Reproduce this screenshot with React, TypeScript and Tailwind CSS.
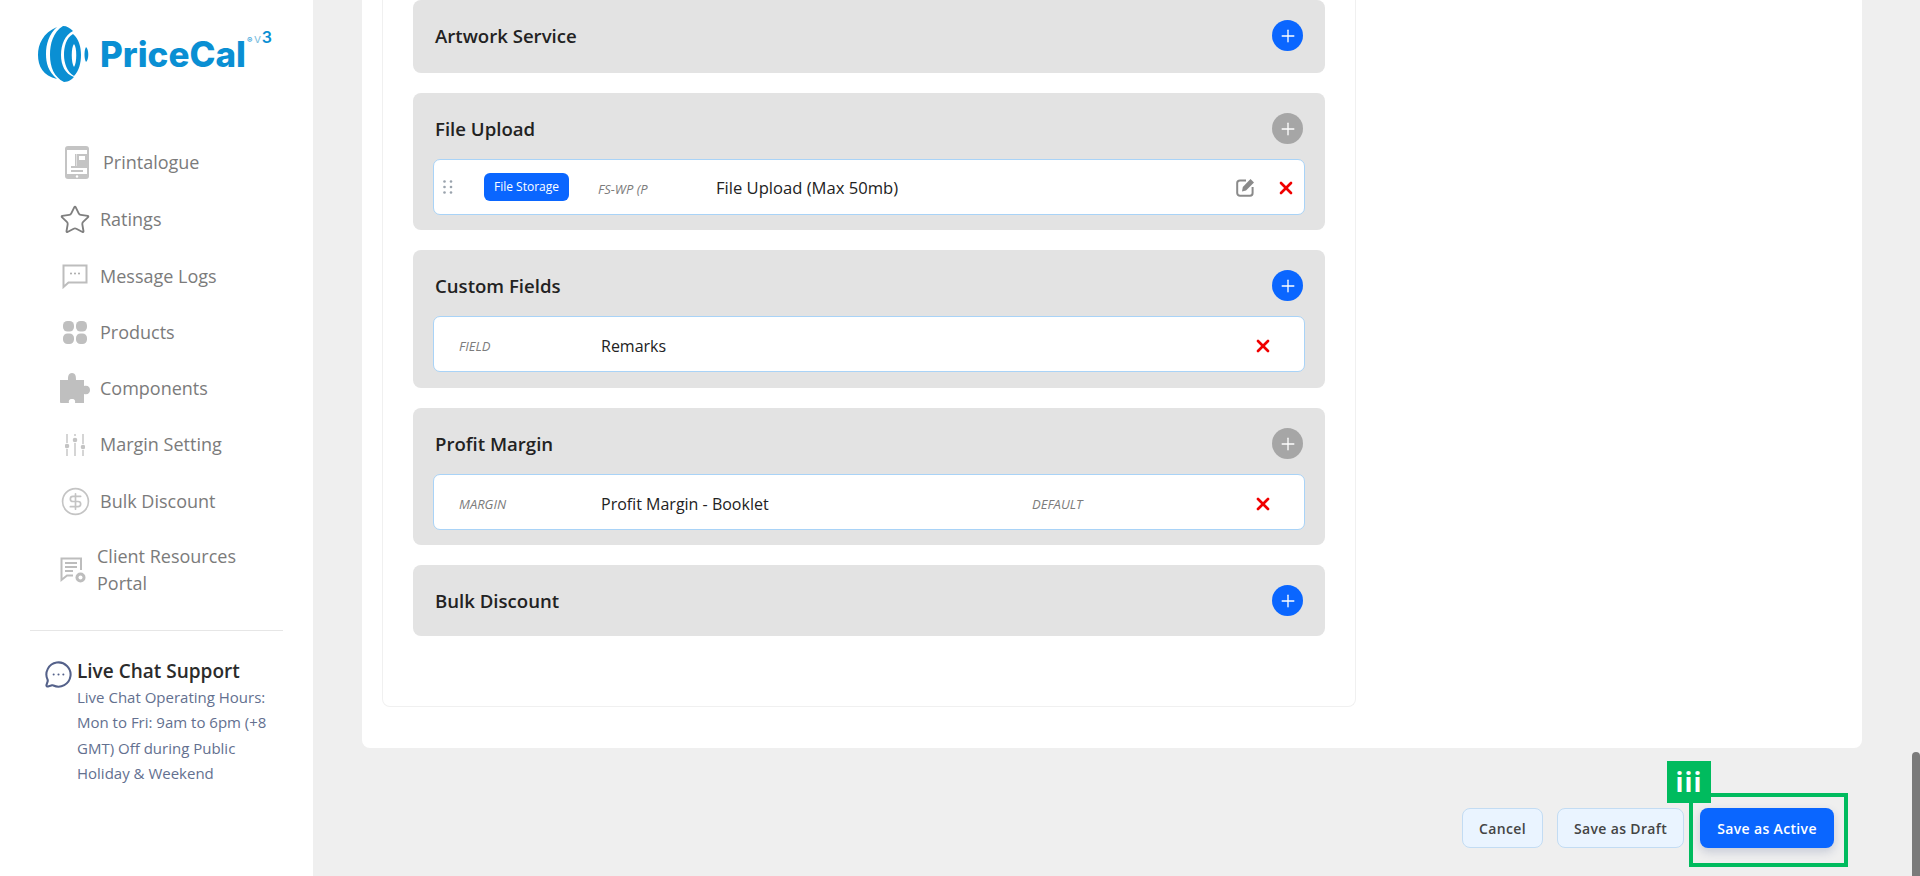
import { Plus, X, Star, CircleDollarSign, MessageCircleMore } from "lucide-react";
import type { ReactNode } from "react";

function Logo() {
  return (
    <div className="flex items-start h-[92px] pl-[38px] pt-[26px]">
      <svg width="52" height="58" viewBox="0 0 52 58" className="shrink-0">
        <path d="M19 1 C5 7 0 18 0 29 C0 40 5 50 19 53 C10 45 8 37 8 28 C8 18 11 8 19 1 Z" fill="#0a8fd3" />
        <path d="M25 0 C15 6 12 18 12 29 C12 41 16 51 26 56 C31 56 34 53 36 51 C27 48 23 39 23 29 C23 18 27 9 35 5 C32 2 29 0 25 0 Z" fill="#0a8fd3" />
        <path d="M35 8 C28 12 26 21 26 29 C26 37 29 46 36 50 C41 45 43 37 43 29 C43 21 41 13 35 8 Z M36 18 C33 21 33 37 36 41 C39 37 39 21 36 18 Z" fill="#0a8fd3" fillRule="evenodd" />
        <path d="M48 21 C46 24 46 33 48 36 C51 34 51 23 48 21 Z" fill="#0a8fd3" />
      </svg>
      <span className="ml-[10px] mt-[7px] font-['Inter',sans-serif] text-[35px] leading-[42px] font-extrabold text-[#0a8fd3]">PriceCal</span>
      <span className="mt-[9px] ml-[1px] font-['Inter',sans-serif] text-[8px] leading-[10px] text-[#0a8fd3]">®</span>
      <span className="mt-[3px] ml-[2px] font-['Open_Sans',sans-serif] text-[13px] leading-[18px] text-[#7fbfe0]">v</span>
      <span className="mt-[2px] ml-[1px] font-['Inter',sans-serif] text-[16px] leading-[18px] font-semibold text-[#0a8fd3]">3</span>
    </div>
  );
}

function PhoneIcon() {
  return (
    <svg width="24" height="33" viewBox="0 0 24 33">
      <rect x="0" y="0" width="24" height="33" rx="3" fill="#c4c4c4" />
      <rect x="2" y="4" width="20" height="24" fill="#fff" />
      <rect x="12" y="8" width="10" height="14" fill="#c4c4c4" />
      <rect x="14" y="10" width="6" height="4" fill="#fff" />
      <rect x="10" y="8" width="1.5" height="14" fill="#c4c4c4" />
      <rect x="6" y="20" width="14" height="2" fill="#c4c4c4" />
      <rect x="6" y="24" width="12" height="2" fill="#c4c4c4" />
      <circle cx="12" cy="30.5" r="1.2" fill="#fff" />
    </svg>
  );
}

function LogsIcon() {
  return (
    <svg width="26" height="25" viewBox="0 0 26 25">
      <path d="M1.5 1.5 H24.5 V18.5 H6.5 L1.5 23 Z" fill="none" stroke="#bdbdbd" strokeWidth="2" />
      <circle cx="9" cy="9.5" r="1" fill="#a9a9a9" />
      <circle cx="13" cy="9.5" r="1" fill="#a9a9a9" />
      <circle cx="17" cy="9.5" r="1" fill="#a9a9a9" />
    </svg>
  );
}

function GridIcon() {
  return (
    <svg width="24" height="23" viewBox="0 0 24 23" fill="#bfbfbf">
      <rect x="0" y="0" width="11" height="10.5" rx="4.5" />
      <rect x="13" y="0" width="11" height="10.5" rx="4.5" />
      <rect x="0" y="12.5" width="11" height="10.5" rx="4.5" />
      <rect x="13" y="12.5" width="11" height="10.5" rx="4.5" />
    </svg>
  );
}

function PuzzleIcon() {
  return (
    <svg width="30" height="30" viewBox="0 0 30 30" fill="#bfbfbf">
      <path d="M0 7 H8 C8 4 8 0 12 0 C16 0 16 4 16 7 H24 V13 C28 12 30 14 30 17 C30 20 28 22 24 21 V30 H15 C15.5 28 15 26 12 26 C9 26 8.5 28 9 30 H1 C0.5 30 0 29.5 0 29 Z" />
    </svg>
  );
}

function SlidersIcon() {
  return (
    <svg width="20" height="22" viewBox="0 0 20 22" stroke="#c4c4c4" strokeWidth="1.4" fill="#c4c4c4">
      <path d="M2 0 V9 M2 15 V22 M10 0 V2 M10 9 V22 M18 0 V10 M18 16 V22" fill="none" />
      <circle cx="2" cy="12" r="1.6" />
      <circle cx="10" cy="6" r="1.6" />
      <circle cx="18" cy="13" r="1.6" />
    </svg>
  );
}

function PortalIcon() {
  return (
    <svg width="26" height="26" viewBox="0 0 26 26">
      <path d="M21 13 V1.5 H1.5 V23 L7 18.5 H13" fill="none" stroke="#bdbdbd" strokeWidth="2" />
      <path d="M5 6 H17 M5 10 H17 M5 14 H13" stroke="#bdbdbd" strokeWidth="1.8" />
      <circle cx="20.5" cy="20.5" r="5" fill="#bdbdbd" />
      <circle cx="20.5" cy="20.5" r="2" fill="#fff" />
    </svg>
  );
}

function NavItem({ icon, label, iconBox, pl, gap, h = "h-[56.5px]" }: { icon: ReactNode; label: string; iconBox: string; pl: string; gap: string; h?: string }) {
  return (
    <div className={`flex items-center ${h} ${pl} ${gap}`}>
      <span className={`flex justify-center shrink-0 ${iconBox}`}>{icon}</span>
      <span className="text-[18px] text-[#7b7b7b] leading-[27px]">{label}</span>
    </div>
  );
}

function Sidebar() {
  return (
    <aside className="w-[313px] shrink-0 bg-white h-full">
      <Logo />
      <nav className="mt-[42px] flex flex-col">
        <NavItem icon={<PhoneIcon />} label="Printalogue" iconBox="w-[24px]" pl="pl-[65px]" gap="gap-[14px]" h="h-[57.5px]" />
        <NavItem icon={<Star size={32} color="#7f7f7f" strokeWidth={1.4} />} label="Ratings" iconBox="w-[32px]" pl="pl-[59px]" gap="gap-[9px]" />
        <NavItem icon={<LogsIcon />} label="Message Logs" iconBox="w-[26px]" pl="pl-[62px]" gap="gap-[12px]" />
        <NavItem icon={<GridIcon />} label="Products" iconBox="w-[24px]" pl="pl-[63px]" gap="gap-[13px]" h="h-[55.5px]" />
        <NavItem icon={<PuzzleIcon />} label="Components" iconBox="w-[30px]" pl="pl-[60px]" gap="gap-[10px]" />
        <NavItem icon={<SlidersIcon />} label="Margin Setting" iconBox="w-[20px]" pl="pl-[65px]" gap="gap-[15px]" />
        <NavItem icon={<CircleDollarSign size={31} color="#c4c4c4" strokeWidth={1.3} />} label="Bulk Discount" iconBox="w-[31px]" pl="pl-[60px]" gap="gap-[9px]" />
        <div className="flex items-center pl-[60px] gap-[11px] mt-[13px]">
          <span className="w-[26px] shrink-0"><PortalIcon /></span>
          <span className="text-[18px] text-[#7b7b7b] leading-[27px] w-[160px]">Client Resources Portal</span>
        </div>
      </nav>
      <div className="mx-[30px] mt-[33px] border-t border-[#e6e6e6]" />
      <div className="flex pl-[44px] mt-[26px]">
        <MessageCircleMore size={29} color="#54618a" strokeWidth={1.7} className="shrink-0 mt-[3px]" />
        <div className="ml-[4px] w-[196px]">
          <div className="text-[19px] leading-[28px] font-semibold text-[#2b2b2b]">Live Chat Support</div>
          <div className="text-[15px] leading-[25.6px] text-[#63708f]">Live Chat Operating Hours: Mon to Fri: 9am to 6pm (+8 GMT) Off during Public Holiday &amp; Weekend</div>
        </div>
      </div>
    </aside>
  );
}

function AddButton({ active }: { active: boolean }) {
  return (
    <span className={`flex items-center justify-center w-[31px] h-[31px] rounded-full ${active ? "bg-[#0a66ff]" : "bg-[#a6a6a6]"}`}>
      <Plus size={20} color="#fff" strokeWidth={1.6} />
    </span>
  );
}

function Section({ title, active, h, children }: { title: string; active: boolean; h: string; children?: ReactNode }) {
  return (
    <section className={`bg-[#e3e3e3] rounded-[8px] px-[21px] ${h}`}>
      <div className="flex items-center justify-between h-[71px] pl-[1px] pr-[1px]">
        <h3 className="text-[18.6px] font-semibold text-[#222]">{title}</h3>
        <AddButton active={active} />
      </div>
      {children}
    </section>
  );
}

function Row({ children }: { children: ReactNode }) {
  return (
    <div className="flex items-center h-[56px] -mt-[5px] mx-[-1px] bg-white border border-[#a9d3f7] rounded-[7px] text-[#222]">
      {children}
    </div>
  );
}

function Tag({ children, className }: { children: ReactNode; className: string }) {
  return <span className={`text-[13px] italic text-[#7c7c7c] mt-[6px] ${className}`}>{children}</span>;
}

function Del({ className }: { className: string }) {
  return <X size={20} color="#f00000" strokeWidth={3.2} className={className} />;
}

function EditIcon() {
  return (
    <svg width="19" height="19" viewBox="0 0 19 19" className="shrink-0 block">
      <path d="M10 2.5 H4 C2.5 2.5 1.2 3.5 1.2 5 V15 C1.2 16.5 2.5 17.8 4 17.8 H14 C15.5 17.8 16.6 16.5 16.6 15 V9" fill="none" stroke="#8a8a8a" strokeWidth="2" />
      <path d="M14.5 1 L18 4.5 L10 12.5 L6 13.5 L6.8 9 Z" fill="#8a8a8a" />
    </svg>
  );
}

function Button({ children, primary, w }: { children: ReactNode; primary?: boolean; w: string }) {
  return (
    <button className={`h-[40px] ${w} rounded-[8px] text-[14px] font-semibold tracking-[0.35px] ${primary ? "bg-[#0a66ff] text-white shadow-[0_4px_10px_rgba(40,60,120,0.2)]" : "bg-[#eaf4ff] text-[#444] border border-[#c3dcf3]"}`}>
      {children}
    </button>
  );
}

export default function App() {
  return (
    <div className="relative flex h-[876px] overflow-hidden bg-[#efefef] font-['Open_Sans',sans-serif]">
      <Sidebar />
      <main className="flex-1 min-w-0 pl-[49px] flex flex-col">
        <div className="w-[1500px] h-[748px] bg-white rounded-b-[8px] shrink-0 pl-[20px]">
          <div className="w-[974px] h-[707px] border border-t-0 border-[#f0f0f0] rounded-b-[8px] pl-[30px]">
            <div className="w-[912px] flex flex-col gap-[20px]">
              <Section title="Artwork Service" active h="h-[73px]" />
              <Section title="File Upload" active={false} h="h-[137px]">
                <Row>
                  <svg width="10" height="14" viewBox="0 0 10 14" fill="#9aa3ad" className="ml-[9px] shrink-0">
                    <circle cx="1.5" cy="1.5" r="1.3" /><circle cx="8" cy="1.5" r="1.3" />
                    <circle cx="1.5" cy="7" r="1.3" /><circle cx="8" cy="7" r="1.3" />
                    <circle cx="1.5" cy="12.5" r="1.3" /><circle cx="8" cy="12.5" r="1.3" />
                  </svg>
                  <span className="ml-[31px] flex items-center justify-center w-[85px] h-[28px] rounded-[6px] bg-[#0a66ff] text-white text-[12px]">File Storage</span>
                  <Tag className="ml-[29px] w-[118px]">FS-WP (P</Tag>
                  <span className="text-[16.6px] font-medium mt-[3px]">File Upload (Max 50mb)</span>
                  <span className="ml-auto mr-[21px]"><EditIcon /></span>
                  <Del className="mr-[8px] mt-[2px]" />
                </Row>
              </Section>
              <Section title="Custom Fields" active h="h-[138px]">
                <Row>
                  <Tag className="ml-[25px] w-[143px]">FIELD</Tag>
                  <span className="text-[16px] -ml-[1px] mt-[4px]">Remarks</span>
                  <Del className="ml-auto mr-[31px] mt-[4px]" />
                </Row>
              </Section>
              <Section title="Profit Margin" active={false} h="h-[137px]">
                <Row>
                  <Tag className="ml-[25px] w-[142px]">MARGIN</Tag>
                  <span className="text-[16px] w-[431px] mt-[4px]">Profit Margin - Booklet</span>
                  <Tag className="">DEFAULT</Tag>
                  <Del className="ml-auto mr-[31px] mt-[4px]" />
                </Row>
              </Section>
              <Section title="Bulk Discount" active h="h-[71px]" />
            </div>
          </div>
        </div>
        <div className="flex justify-end gap-[14px] w-[1472px] mt-[60px]">
          <Button w="w-[81px]">Cancel</Button>
          <Button w="w-[127px]">Save as Draft</Button>
          <span className="ml-[2px]">
            <Button primary w="w-[134px]">Save as Active</Button>
          </span>
        </div>
      </main>
      <div className="absolute left-[1689px] top-[793px] w-[159px] h-[74px] border-[4px] border-[#00bb5e]" />
      <div className="absolute left-[1667px] top-[761px] w-[44px] h-[42px] bg-[#00bb5e] flex items-center justify-center text-white text-[26px] font-bold tracking-[1px] leading-none">iii</div>
      <div className="absolute left-[1912px] top-[752px] w-[8px] h-[124px] rounded-t-[4px] bg-[#7a7a7a]" />
    </div>
  );
}
